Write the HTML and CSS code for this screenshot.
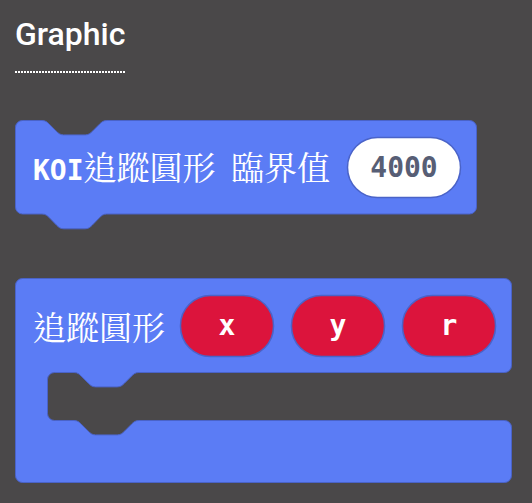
FILE: index.html
```html
<!DOCTYPE html>
<html lang="zh-Hant">
<head>
    <meta charset="UTF-8">
    <meta name="viewport" content="width=device-width, initial-scale=1.0">
    <title>Graphic</title>
    <link rel="stylesheet" href="styles.css">
</head>
<body>
    <div class="flyout">
        <h2 class="category">Graphic</h2>

        <!-- KOI threshold block (statement, with notch and tab) -->
        <svg class="block block-koi" width="463" height="113" viewBox="0 0 463 113">
            <path class="block-shape" d="M0.5,7.5 a7,7 0 0 1 7,-7 H27 c3.6,0 5.4,1.8 7.2,3.6 l7.2,7.2 c1.8,1.8 3.6,3.6 7.2,3.6 h21.6 c3.6,0 5.4,-1.8 7.2,-3.6 l7.2,-7.2 c1.8,-1.8 3.6,-3.6 7.2,-3.6 H454.5 a7,7 0 0 1 7,7 V87 a7,7 0 0 1 -7,7 H91.8 c-3.6,0 -5.4,1.8 -7.2,3.6 l-7.4,7.6 c-1.8,1.8 -3.6,3.6 -7.2,3.6 h-21.2 c-3.6,0 -5.4,-1.8 -7.2,-3.6 l-7.4,-7.6 c-1.8,-1.8 -3.6,-3.6 -7.2,-3.6 H7.5 a7,7 0 0 1 -7,-7 Z"/>
            <text class="label" x="18" y="60"><tspan class="mono">KOI</tspan><tspan class="cjk">追蹤圓形</tspan><tspan class="cjk" x="216">臨界值</tspan></text>
            <rect class="field field-number" x="332.5" y="17.5" width="113" height="60" rx="30"/>
            <text class="field-text field-number-text" x="389" y="57">4000</text>
        </svg>

        <!-- track circle block (C-shaped, with x / y / r variables) -->
        <svg class="block block-track" width="498" height="206" viewBox="0 0 498 206">
            <path class="block-shape" d="M0.5,7.5 a7,7 0 0 1 7,-7 H489.5 a7,7 0 0 1 7,7 V87.5 a7,7 0 0 1 -7,7 H123.8 c-3.6,0 -5.4,1.8 -7.2,3.6 l-7.2,7.2 c-1.8,1.8 -3.6,3.6 -7.2,3.6 h-21.6 c-3.6,0 -5.4,-1.8 -7.2,-3.6 l-7.2,-7.2 c-1.8,-1.8 -3.6,-3.6 -7.2,-3.6 H39.5 a7,7 0 0 0 -7,7 V135.5 a7,7 0 0 0 7,7 H59 c3.6,0 5.4,1.8 7.2,3.6 l7.2,7.2 c1.8,1.8 3.6,3.6 7.2,3.6 h21.6 c3.6,0 5.4,-1.8 7.2,-3.6 l7.2,-7.2 c1.8,-1.8 3.6,-3.6 7.2,-3.6 H489.5 a7,7 0 0 1 7,7 V197.5 a7,7 0 0 1 -7,7 H7.5 a7,7 0 0 1 -7,-7 Z"/>
            <text class="label" x="18" y="62"><tspan class="cjk">追蹤圓形</tspan></text>

            <rect class="field field-var" x="165.5" y="17.5" width="93" height="61" rx="30"/>
            <text class="field-text var-text" x="212" y="57">x</text>

            <rect class="field field-var" x="276.5" y="17.5" width="93" height="61" rx="30"/>
            <text class="field-text var-text" x="323" y="57">y</text>

            <rect class="field field-var" x="387.5" y="17.5" width="93" height="61" rx="30"/>
            <text class="field-text var-text" x="434" y="57">r</text>
        </svg>
    </div>
</body>
</html>
```

FILE: styles.css
```css
:root {
    --bg: #4a4849;
    --block: #5b7cf5;
    --block-edge: #4a63c8;
    --variable: #dc143c;
    --number-text: #575e75;
    --white: #fff;
}

* {
    margin: 0;
    padding: 0;
    box-sizing: border-box;
}

body {
    background-color: var(--bg);
    min-height: 100vh;
    font-family: Roboto, "Noto Sans", sans-serif;
}

.flyout {
    padding: 16px 0 0 15px;
}

/* Category label with dotted rule */
.category {
    display: inline-block;
    color: var(--white);
    font-size: 32px;
    font-weight: 500;
    line-height: 36px;
    padding: 0 1px 21px 0;
    background-image: repeating-linear-gradient(to right, var(--white) 0 2px, transparent 2px 3px);
    background-size: 100% 2px;
    background-position: left bottom;
    background-repeat: no-repeat;
}

/* Blocks */
.block {
    display: block;
    overflow: visible;
}

.block-koi {
    margin-top: 47px;
}

.block-track {
    margin-top: 45px;
}

.block-shape {
    fill: var(--block);
    stroke: var(--block-edge);
    stroke-width: 1;
}

.label {
    fill: var(--white);
}

.mono {
    font-family: "DejaVu Sans Mono", "Liberation Mono", monospace;
    font-weight: bold;
    font-size: 28px;
}

.cjk {
    font-family: "Noto Serif CJK TC", "Noto Sans CJK TC", sans-serif;
    font-weight: normal;
    font-size: 33px;
}

/* Inputs */
.field {
    stroke: var(--block-edge);
    stroke-width: 1.5;
}

.field-number {
    fill: var(--white);
}

.field-var {
    fill: var(--variable);
}

.field-text {
    font-family: "DejaVu Sans Mono", "Liberation Mono", monospace;
    font-weight: bold;
    font-size: 28px;
    text-anchor: middle;
}

.field-number-text {
    fill: var(--number-text);
}

.var-text {
    fill: var(--white);
}
```
